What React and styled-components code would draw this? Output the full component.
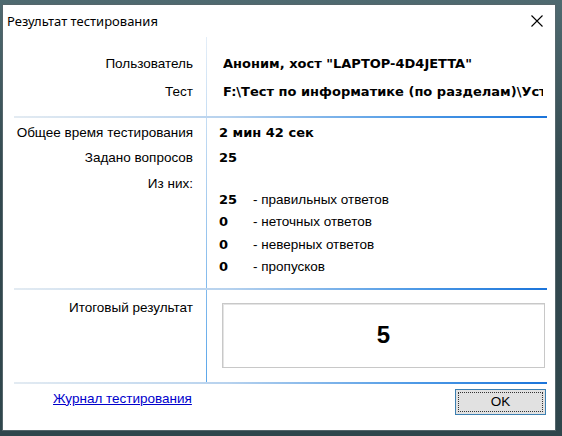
import React from 'react';
import styled, { createGlobalStyle } from 'styled-components';

const GlobalStyle = createGlobalStyle`
  html, body {
    margin: 0;
    padding: 0;
    width: 562px;
    height: 436px;
    overflow: hidden;
    background: linear-gradient(180deg, #4f6a70 0%, #33494f 40%, #2f464c 100%);
  }
`;

const Desktop = styled.div`
  width: 562px;
  height: 436px;
  padding: 4px 0 0 2px;
  box-sizing: border-box;
`;

const Window = styled.div`
  width: 554px;
  height: 427px;
  box-sizing: border-box;
  border: 1px solid #55666b;
  background: #ffffff;
  display: flex;
  flex-direction: column;
  font-family: "Liberation Sans", Arial, sans-serif;
  font-size: 13.5px;
  color: #000;
`;

const TitleBar = styled.div`
  height: 32px;
  display: flex;
  align-items: center;
  justify-content: space-between;
  padding: 0 11px 0 4px;
`;

const Title = styled.span`
  font-family: "Noto Sans", "Open Sans", sans-serif;
  font-size: 13px;
  color: #000;
  margin-top: -1px;
`;

const Close = styled.button`
  border: none;
  background: transparent;
  padding: 0;
  width: 14px;
  height: 14px;
  display: flex;
  align-items: center;
  justify-content: center;
`;

const Body = styled.div`
  background: linear-gradient(180deg, #e4eef8 0%, #a9cdef 45%, #5aa6ea 100%) no-repeat 203px 0 / 1px 100%;
`;

const Separator = styled.div`
  height: 2px;
  margin: 0 8px 0 11px;
  background: linear-gradient(90deg, #e3ebf2 0%, #b7d2ee 40%, #4e9ae6 75%, #1b74da 100%);
`;

const Section = styled.div`
  display: grid;
  grid-template-columns: 190px 1fr;
  column-gap: ${p => p.$gap}px;
  padding: ${p => p.$pad};
`;

const Label = styled.div`
  text-align: right;
  line-height: ${p => p.$lh || 16}px;
  height: ${p => p.$h || 16}px;
  padding-top: ${p => p.$top || 0}px;
  white-space: nowrap;
`;

const Value = styled.div`
  font-family: "DejaVu Sans", Verdana, sans-serif;
  font-size: 13px;
  font-weight: bold;
  line-height: ${p => p.$h}px;
  height: ${p => p.$h}px;
  white-space: nowrap;
  overflow: hidden;
  width: 320px;
`;

const Counts = styled.div`
  padding-top: 19px;
`;

const CountRow = styled.div`
  display: flex;
  height: 22.4px;
  line-height: 22.4px;
`;

const Num = styled.span`
  width: 34px;
  font-family: "DejaVu Sans", Verdana, sans-serif;
  font-size: 13px;
  font-weight: bold;
`;

const ResultBox = styled.div`
  margin-top: 3px;
  width: 323px;
  height: 65px;
  box-sizing: border-box;
  border: 1px solid #c8c8c8;
  box-shadow: inset 1px 1px 0 #e4e4e4;
  display: flex;
  align-items: center;
  justify-content: center;
  font-size: 24px;
  font-weight: bold;
`;

const Footer = styled.div`
  flex: 1;
  display: flex;
  justify-content: space-between;
  align-items: flex-start;
  padding: 5px 9px 0 50px;
`;

const Link = styled.a`
  color: #0000cc;
  text-decoration: underline;
  margin-top: 2px;
  cursor: pointer;
`;

const OkButton = styled.button`
  width: 91px;
  height: 26px;
  box-sizing: border-box;
  border: 1px solid #3c7fb1;
  background: #e1e1e1;
  font-family: "Liberation Sans", Arial, sans-serif;
  font-size: 13.5px;
  color: #000;
  padding: 0;
  outline: 1px dotted #333;
  outline-offset: -4px;
`;

const stats = [
  { n: 25, t: '- правильных ответов' },
  { n: 0, t: '- неточных ответов' },
  { n: 0, t: '- неверных ответов' },
  { n: 0, t: '- пропусков' },
];

export default function App() {
  return (
    <>
      <GlobalStyle />
      <Desktop>
        <Window>
          <TitleBar>
            <Title>Результат тестирования</Title>
            <Close aria-label="Закрыть">
              <svg width="12" height="12" viewBox="0 0 12 12">
                <path d="M0.5 0.5 L11.5 11.5 M11.5 0.5 L0.5 11.5" stroke="#000" strokeWidth="1.1" />
              </svg>
            </Close>
          </TitleBar>
          <Body>
            <Section $gap={30} $pad="13px 0 10px 0">
              <Label $lh={28} $h={28}>Пользователь</Label>
              <Value $h={28}>Аноним, хост "LAPTOP-4D4JETTA"</Value>
              <Label $lh={28} $h={28}>Тест</Label>
              <Value $h={28}>F:\Тест по информатике (по разделам)\Устройство компьютера.tst</Value>
            </Section>
            <Separator />
            <Section $gap={26} $pad="2px 0 9px 0">
              <Label $lh={25} $h={25}>Общее время тестирования</Label>
              <Value $h={25}>2 мин 42 сек</Value>
              <Label $lh={25} $h={25}>Задано вопросов</Label>
              <Value $h={25}>25</Value>
              <Label $top={6}>Из них:</Label>
              <Counts>
                {stats.map((s, i) => (
                  <CountRow key={i}>
                    <Num>{s.n}</Num>
                    <span>{s.t}</span>
                  </CountRow>
                ))}
              </Counts>
            </Section>
            <Separator />
            <Section $gap={29} $pad="10px 0 14px 0">
              <Label>Итоговый результат</Label>
              <ResultBox>5</ResultBox>
            </Section>
            <Separator />
          </Body>
          <Footer>
            <Link>Журнал тестирования</Link>
            <OkButton>OK</OkButton>
          </Footer>
        </Window>
      </Desktop>
    </>
  );
}
